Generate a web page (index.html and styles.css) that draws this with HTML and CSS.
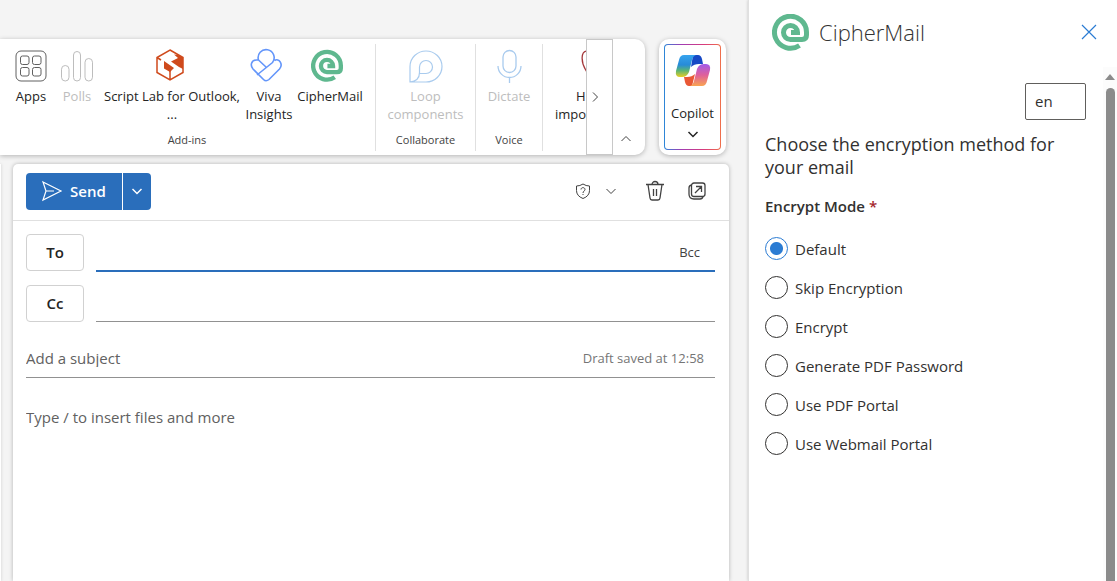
FILE: index.html
```
<!DOCTYPE html>
<html lang="en">
<head>
<meta charset="utf-8">
<title>New message</title>
<link rel="stylesheet" href="styles.css">
</head>
<body>
<svg class="defs" aria-hidden="true">
  <symbol id="cipher" viewBox="0 0 37 37">
    <path d="M27.500 31.500A16 16 0 1 1 34.500 18.500V21Q34.500 25.500 30 25.500H18.500A7 7 0 1 1 25.500 18.500H19" fill="none" stroke="#5fb88f" stroke-width="5"/>
  </symbol>
  <symbol id="down" viewBox="0 0 12 12"><path d="M1.500 4 6 8.500 10.500 4" fill="none" stroke="currentColor"/></symbol>
</svg>
<main class="mail">
  <div class="top">
    <div class="ribbon">
      <section class="group addins">
        <div class="tools">
          <button class="tool apps"><svg width="32" height="34" viewBox="0 0 32 34" fill="none" stroke="#616161"><rect x="1" y="3" width="30" height="30" rx="5"/><rect x="5.500" y="8" width="8.500" height="8.500" rx="2"/><rect x="17.500" y="8" width="8.500" height="8.500" rx="2"/><rect x="5.500" y="19.500" width="8.500" height="8.500" rx="2"/><rect x="17.500" y="19.500" width="8.500" height="8.500" rx="2"/></svg><span>Apps</span></button>
          <button class="tool polls" disabled><svg width="32" height="34" viewBox="0 0 32 34" fill="none" stroke="#bdbdbd"><rect x="0.500" y="17.500" width="7.500" height="15.500" rx="3.750"/><rect x="12.500" y="3.500" width="7" height="29.500" rx="3.500"/><rect x="24" y="10.500" width="7.500" height="22.500" rx="3.750"/></svg><span>Polls</span></button>
          <button class="tool script"><svg width="32" height="34" viewBox="0 0 32 34"><path d="M14 2 27 9.500V24.500L14 32 1 24.500V9.500ZM14 23V32M1 9.500 5 12" fill="none" stroke="#cf4a1c" stroke-width="1.500"/><path d="M18 6.500 22 7 27 9.500V21L23 19 15 13.500 22 10ZM8 13 18 20 14 24 8 20.500Z" fill="#cf4a1c"/></svg><span>Script Lab for Outlook,<br>...</span></button>
          <button class="tool viva"><svg width="38" height="34" viewBox="0 0 38 34" fill="none" stroke="#6496fa" stroke-width="1.600"><path d="M8.500 12A8 8 0 1 1 22.500 14.500L7 27M8.500 12H6.500C1 12 0 17.500 3 21L13.500 31.500Q16 34 19 31.500L29.500 21C33.500 16.500 29 9.500 24.500 12.500M8.500 12 16.500 19.500"/></svg><span>Viva<br>Insights</span></button>
          <button class="tool cipher"><svg width="38" height="34"><use href="#cipher" width="32" height="34" y="1"/></svg><span>CipherMail</span></button>
        </div>
        <h2>Add-ins</h2>
      </section>
      <section class="group collab">
        <div class="tools"><button class="tool" disabled><svg width="34" height="34" viewBox="0 0 34 34" fill="none" stroke="#a9cbee" stroke-width="1.200"><path d="M1 34V18.500A16 15.500 0 1 1 17 34ZM1 34Q10.500 33 10.500 24.500V19A6.500 6.500 0 1 1 17 25.500H10.500"/></svg><span>Loop<br>components</span></button></div>
        <h2>Collaborate</h2>
      </section>
      <section class="group voice">
        <div class="tools"><button class="tool" disabled><svg width="34" height="34" viewBox="0 0 34 34" fill="none" stroke="#a9cbee" stroke-width="1.300"><rect x="11" y="2.500" width="13" height="22" rx="6.500"/><path d="M6 18A11.500 11.500 0 0 0 29 18M17.500 29.500V35"/></svg><span>Dictate</span></button></div>
        <h2>Voice</h2>
      </section>
      <section class="group tags">
        <div class="tools"><button class="tool"><svg width="34" height="34" viewBox="0 0 34 34" fill="none" stroke="#a4373a" stroke-width="1.300"><path d="M14 24C7 14 8 3 14 3S21 14 14 24Z"/></svg><span>High<br>importance</span></button></div>
      </section>
      <button class="more" aria-label="More commands"><svg width="12" height="12"><use href="#down"/></svg></button>
      <button class="collapse" aria-label="Collapse ribbon"><svg width="12" height="12"><use href="#down"/></svg></button>
    </div>
    <div class="copilot-card"><button class="copilot">
      <svg width="36" height="34" viewBox="0 0 36 34"><defs><linearGradient id="a" x2="0" y2="1"><stop stop-color="#36a3ee"/><stop offset=".45" stop-color="#278bd8"/><stop offset=".7" stop-color="#58b478"/><stop offset="1" stop-color="#e8ce22"/></linearGradient><linearGradient id="b" x2="0" y2="1"><stop stop-color="#a25bea"/><stop offset=".5" stop-color="#df609b"/><stop offset="1" stop-color="#f9a451"/></linearGradient></defs><path d="M18 1H23Q26 1 27 5L28 10H24Q19 10 16 13Z" fill="#1749c5"/><path d="M20 20 17 32H14Q11 32 10 28L9 23H12Q17 23 20 20Z" fill="#e95835"/><path d="M9 1H21Q18 2 17 6L14 18Q12 23 7 23H5Q0 23 1 17L4 6Q5 1 9 1Z" fill="url(#a)"/><path d="M27 32H15Q18 31 19 27L22 15Q24 10 29 10H31Q36 10 35 16L32 27Q31 32 27 32Z" fill="url(#b)"/></svg>
      <span>Copilot</span><svg class="strong" width="12" height="12"><use href="#down"/></svg>
    </button></div>
  </div>
  <div class="workspace">
    <div class="list-edge"></div>
    <form class="compose">
      <div class="actions">
        <div class="send"><button type="button" class="send-main"><svg width="20" height="20" viewBox="0 0 20 20" fill="none" stroke="currentColor" stroke-width="1.200"><path d="M1 1 19 10 1 19 4 10Z M4 10H12"/></svg>Send</button><button type="button" class="send-more" aria-label="More send options"><svg class="strong" width="12" height="12"><use href="#down"/></svg></button></div>
        <button type="button" class="icon sensitivity" aria-label="Sensitivity"><svg width="16" height="18" viewBox="0 0 16 18" fill="none" stroke="currentColor"><path d="M8 2Q11 4 14.500 4V8.500Q14.500 14 8 16.500Q1.500 14 1.500 8.500V4Q5 4 8 2ZM6 7.500C6 5 10 5 10 7.500C10 9 8 9 8 11M8 12V13"/></svg><svg width="12" height="12"><use href="#down"/></svg></button>
        <button type="button" class="icon" aria-label="Discard"><svg width="18" height="20" viewBox="0 0 18 20" fill="none" stroke="currentColor" stroke-width="1.300"><path d="M0 3.500H18M6 3.500A3 3 0 0 1 12 3.500M2 3.500 4 17Q4.200 19 6 19H12Q13.800 19 14 17L16 3.500M7.500 8V15M10.500 8V15"/></svg></button>
        <button type="button" class="icon popout" aria-label="Open in new window"><svg width="18" height="18" viewBox="0 0 18 18" fill="none" stroke="currentColor" stroke-width="1.300"><rect x="3.500" y="1" width="13.500" height="13.500" rx="2.500"/><path d="M3.500 3Q1 3.500 1 6V12Q1 17 6 17H12Q14.500 17 15 14.500M7 11 13.500 4.500M8 4.500H13.500V10"/></svg></button>
      </div>
      <div class="fields">
        <div class="row"><button type="button" class="who">To</button><div class="line active"><input type="text" aria-label="To"><button type="button" class="bcc">Bcc</button></div></div>
        <div class="row"><button type="button" class="who">Cc</button><div class="line"><input type="text" aria-label="Cc"></div></div>
        <div class="line subject"><input type="text" aria-label="Subject" placeholder="Add a subject"><span>Draft saved at 12:58</span></div>
        <textarea aria-label="Message body" placeholder="Type / to insert files and more"></textarea>
      </div>
    </form>
  </div>
</main>
<aside class="pane">
  <header><svg width="37" height="37"><use href="#cipher"/></svg><h1>CipherMail</h1><button class="close" aria-label="Close"><svg width="14" height="14" viewBox="0 0 14 14" stroke="currentColor" stroke-width="1.200"><path d="M0 0 14 14M14 0 0 14"/></svg></button></header>
  <div class="scroller">
    <form class="options">
      <select class="lang" aria-label="Language"><option>en</option></select>
      <p>Choose the encryption method for your email</p>
      <fieldset>
        <legend>Encrypt Mode <span>*</span></legend>
        <label><input type="radio" name="mode" checked>Default</label>
        <label><input type="radio" name="mode">Skip Encryption</label>
        <label><input type="radio" name="mode">Encrypt</label>
        <label><input type="radio" name="mode">Generate PDF Password</label>
        <label><input type="radio" name="mode">Use PDF Portal</label>
        <label><input type="radio" name="mode">Use Webmail Portal</label>
      </fieldset>
    </form>
    <div class="bar"><i class="arrow"></i><i class="thumb"></i></div>
  </div>
</aside>
</body>
</html>
```
FILE: styles.css
```
* { box-sizing: border-box; }
body { margin: 0; height: 100vh; display: flex; overflow: hidden; background: #f4f4f4; color: #242424; font: 13px/18px "Open Sans", "Noto Sans", sans-serif; }
button, input, textarea, select { font: inherit; color: inherit; border: 0; background: none; padding: 0; margin: 0; outline: 0; }
svg { display: block; flex: none; overflow: visible; }
.defs { display: none; }
.strong { stroke-width: 1.5; }
.mail { flex: 1; min-width: 0; display: flex; flex-direction: column; padding-top: 39px; }
.top { display: flex; gap: 14px; padding-right: 22px; }
.ribbon { flex: 1; min-width: 0; height: 116px; display: flex; background: #fff; border-radius: 0 10px 10px 0; box-shadow: 0 1px 5px #0004; }
.group { flex: none; display: flex; flex-direction: column; margin: 5px 0 4px; padding-top: 4px; border-right: 1px solid #e0e0e0; }
.group h2 { margin: auto 0 2px; font-size: 11px; font-weight: 400; text-align: center; line-height: 18px; color: #424242; }
.tools { display: flex; justify-content: center; }
.tool { display: flex; flex-direction: column; align-items: center; gap: 5px; white-space: nowrap; }
.tool:disabled { color: #bdbdbd; }
.addins { width: 376px; padding-left: 8px; padding-right: 9px; }
.apps, .polls { width: 46px; }
.script { width: 144px; }
.viva { width: 50px; }
.cipher { width: 72px; }
.collab { width: 100px; }
.voice { width: 67px; }
.tags { flex: 1 1 43px; min-width: 0; border: 0; overflow: hidden; }
.tags .tools { justify-content: flex-start; padding-left: 12px; }
.more { width: 28px; display: flex; align-items: center; padding-left: 2px; border: 1px solid #c8c8c8; background: #fff; color: #424242; }
.more svg { transform: rotate(-90deg); }
.collapse { width: 32px; display: flex; align-items: flex-end; padding: 0 0 10px 7px; color: #424242; }
.collapse svg { transform: rotate(180deg); }
.copilot-card { width: 67px; padding: 5px; background: #fff; border-radius: 10px; box-shadow: 0 1px 5px #0004; }
.copilot { width: 100%; height: 106px; display: flex; flex-direction: column; align-items: center; padding-top: 9px; border: 1px solid transparent; border-radius: 4px; background: linear-gradient(#fff, #fff) padding-box, linear-gradient(90deg, #2b88d8, #a03cb4 30%, #d83b7d 70%, #f0704a) border-box; }
.copilot span { margin: 16px 0 6px; }
.workspace { flex: 1; display: flex; gap: 12px; padding: 9px 19px 0 0; min-height: 0; }
.list-edge { width: 1px; background: #fff; box-shadow: 0 0 3px #0004; }
.compose { flex: 1; display: flex; flex-direction: column; background: #fff; border-radius: 5px 5px 0 0; box-shadow: 0 0 4px #0004; }
.actions { height: 57px; display: flex; align-items: center; padding: 0 23px 2px 13px; border-bottom: 1px solid #e0e0e0; color: #424242; }
.send { display: flex; height: 37px; margin-right: auto; border-radius: 4px; overflow: hidden; background: #2a6ebb; color: #fff; }
.send-main { width: 97px; display: flex; align-items: center; justify-content: center; gap: 8px; font-size: 15px; font-weight: 600; border-right: 1px solid #fff; }
.send-more { width: 28px; display: grid; place-items: center; }
.icon { display: flex; align-items: center; }
.sensitivity { gap: 14px; margin-right: 29px; }
.popout { margin-left: 24px; }
.fields { flex: 1; display: flex; flex-direction: column; padding: 13px 14px 0 13px; }
.row { display: flex; gap: 12px; margin-bottom: 14px; }
.who { width: 58px; height: 37px; padding-bottom: 2px; border: 1px solid #d1d1d1; border-radius: 4px; font-size: 15px; font-weight: 600; }
.line { flex: 1; display: flex; align-items: center; border-bottom: 1px solid #919191; }
.line input { flex: 1; min-width: 0; }
.row .active { border-bottom: 2px solid #2a6ebb; margin-bottom: -1px; }
.bcc { margin-right: 15px; color: #424242; }
.subject { flex: none; height: 42px; padding-top: 2px; font-size: 15px; }
.subject span { font-size: 13px; color: #757575; margin-right: 11px; }
::placeholder { color: #616161; opacity: 1; }
textarea { flex: 1; resize: none; padding-top: 29px; font-size: 15px; line-height: 20px; }
.pane { width: 369px; display: flex; flex-direction: column; background: #fff; border-left: 1px solid #e0e0e0; box-shadow: 0 0 3px #0003; }
.pane header { height: 67px; display: flex; align-items: center; padding: 0 21px 2px 23px; }
.pane h1 { margin: 0 auto 0 10px; padding-bottom: 2px; font-size: 22px; line-height: 30px; font-weight: 300; color: #333; }
.close { padding-bottom: 2px; color: #2b7cd3; }
.scroller { flex: 1; display: flex; min-height: 0; }
.options { flex: 1; padding: 16px 17px 0 16px; color: #323130; }
.lang { appearance: none; display: block; width: 61px; height: 37px; margin-left: auto; padding: 0 9px 2px; border: 1px solid #605e5c; border-radius: 2px; font-size: 15px; }
.options p { margin: 13px 0 17px; font-size: 18px; line-height: 23px; }
fieldset { border: 0; margin: 0; padding: 0; font-size: 15px; line-height: 20px; }
legend { padding: 0; margin-bottom: 21px; font-weight: 600; }
legend span { color: #a4262c; }
label { display: flex; align-items: center; gap: 7px; height: 23px; margin-bottom: 16px; }
label input { appearance: none; width: 23px; height: 23px; border: 1px solid #323130; border-radius: 50%; }
label input:checked { border-color: #2b7cd3; background: radial-gradient(circle, #2b7cd3 6px, transparent 7px); }
.bar { width: 14px; display: flex; flex-direction: column; align-items: center; padding-top: 7px; background: #fcfcfc; }
.arrow { border: 5px solid transparent; border-top: 0; border-bottom: 6px solid #8b8b8b; }
.thumb { flex: 1; width: 9px; margin-top: 8px; border-radius: 5px 5px 0 0; background: #8b8b8b; }
```
